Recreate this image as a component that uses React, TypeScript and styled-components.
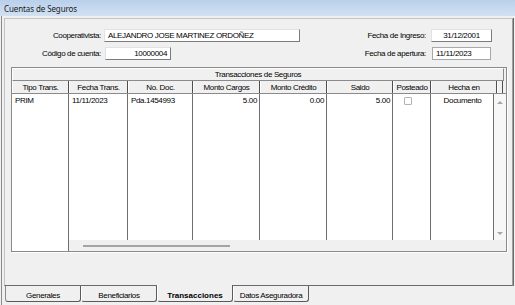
import React from 'react'
import styled, { createGlobalStyle } from 'styled-components'

const GlobalStyle = createGlobalStyle`
  html, body {
    margin: 0;
    padding: 0;
    background: #f0f0f0;
  }
  body {
    font-family: 'Liberation Sans', Arial, sans-serif;
    font-size: 8px;
    letter-spacing: -0.35px;
    color: #000;
  }
  * {
    box-sizing: border-box;
  }
`

const Window = styled.div`
  width: 515px;
  height: 305px;
  display: flex;
  flex-direction: column;
  background: #f0f0f0;
  overflow: hidden;
`

const TitleBar = styled.div`
  height: 16px;
  flex: none;
  display: flex;
  align-items: center;
  padding-left: 4px;
  background: linear-gradient(to bottom, #b9d0ea, #d2e1f2);
  font-family: 'Noto Sans', sans-serif;
  font-size: 8px;
  letter-spacing: -0.1px;
  color: #1a1a1a;
`

const Frame = styled.div`
  flex: 1;
  display: flex;
  flex-direction: column;
  margin-left: 1px;
  border-left: 1px solid #8a8a8a;
  padding: 2px 2px 3px 2px;
`

const TabPage = styled.div`
  flex: 1;
  display: flex;
  flex-direction: column;
  border: 1px solid;
  border-color: #c4c4c4 #a0a0a0 #6a6a6a #c4c4c4;
  box-shadow: 1px 0 0 #6a6a6a;
  padding-top: 10px;
`

const Fields = styled.div`
  display: grid;
  grid-template-columns: 99px 196px 1fr 61px;
  grid-auto-rows: 13px;
  row-gap: 5px;
  align-items: center;
  padding-right: 20px;
`

const Label = styled.span<{ $pad: number }>`
  text-align: right;
  padding-right: ${({ $pad }) => $pad}px;
  white-space: nowrap;
`

const Input = styled.div<{ $w?: number; $align?: string; $flat?: boolean; $indent?: number }>`
  height: 13px;
  width: ${({ $w }) => ($w ? `${$w}px` : '100%')};
  margin-left: ${({ $indent }) => $indent || 0}px;
  background: #fff;
  display: flex;
  align-items: center;
  justify-content: ${({ $align }) => $align || 'flex-start'};
  padding: 0 3px;
  white-space: nowrap;
  border: 1px solid;
  border-color: ${({ $flat }) => ($flat ? '#a8a8a8' : '#e2e2e2 #7c7c7c #7c7c7c #e2e2e2')};
`

const GridBox = styled.div`
  margin: 7px 5px 0 6px;
  height: 185px;
  border: 1px solid #8a8a8a;
  box-shadow: 1px 1px 0 #fff;
  display: flex;
  flex-direction: column;
`

const GridTitle = styled.div`
  height: 13px;
  flex: none;
  display: flex;
  align-items: center;
  justify-content: center;
  border: 1px solid;
  border-color: #fff #8a8a8a #8a8a8a #fff;
  margin-right: 2px;
`

const HeaderRow = styled.div`
  height: 13px;
  flex: none;
  display: flex;
  border-bottom: 1px solid #8a8a8a;
`

const HeaderCell = styled.div<{ $w: number }>`
  width: ${({ $w }) => $w}px;
  flex: none;
  display: flex;
  align-items: center;
  justify-content: center;
  border-right: 1px solid #4e4e4e;
  border-left: 1px solid #fff;
  white-space: nowrap;
`

const Body = styled.div`
  flex: 1;
  display: flex;
  min-height: 0;
`

const FrozenColumn = styled.div<{ $w: number }>`
  width: ${({ $w }) => $w}px;
  flex: none;
  background: #fff;
  border-right: 1px solid #6e6e6e;
`

const Scrolling = styled.div`
  flex: 1;
  display: flex;
  flex-direction: column;
`

const Columns = styled.div`
  flex: 1;
  display: flex;
`

const Column = styled.div<{ $w: number }>`
  width: ${({ $w }) => $w}px;
  flex: none;
  background: #fff;
  border-right: 1px solid #6e6e6e;
`

const Cell = styled.div<{ $align?: string }>`
  height: 13px;
  display: flex;
  align-items: center;
  justify-content: ${({ $align }) => $align || 'flex-start'};
  padding: 0 2px 0 3px;
  white-space: nowrap;
`

const CheckBox = styled.div`
  width: 8px;
  height: 8px;
  margin: 3px 0 0 11px;
  border: 1px solid #b4b4b4;
  border-radius: 1px;
  background: #fff;
`

const VScroll = styled.div`
  flex: 1;
  display: flex;
  flex-direction: column;
  justify-content: space-between;
  align-items: center;
  background: #f7f7f7;
  padding: 7px 0 5px;
`

const Arrow = styled.div<{ $down?: boolean }>`
  width: 0;
  height: 0;
  border-left: 3px solid transparent;
  border-right: 3px solid transparent;
  ${({ $down }) => ($down ? 'border-top: 3px solid #a6a6a6;' : 'border-bottom: 3px solid #a6a6a6;')}
`

const HScroll = styled.div`
  height: 11px;
  flex: none;
  display: flex;
  align-items: center;
  padding-left: 14px;
  background: #f0f0f0;
`

const Thumb = styled.div`
  width: 147px;
  height: 2px;
  background: #a4a4a4;
`

const TabStrip = styled.div`
  height: 16px;
  flex: none;
  display: flex;
  padding-left: 1px;
`

const Tab = styled.div<{ $active?: boolean; $first?: boolean }>`
  width: 76px;
  flex: none;
  display: flex;
  align-items: center;
  justify-content: center;
  padding-top: 3px;
  border-right: 1px solid #5a5a5a;
  border-bottom: 1px solid #5a5a5a;
  border-left: 1px solid ${({ $first }) => ($first ? '#8a8a8a' : '#fff')};
  border-radius: 0 0 3px 3px;
  font-weight: ${({ $active }) => ($active ? 700 : 400)};
  letter-spacing: ${({ $active }) => ($active ? '0' : '-0.35px')};
  ${({ $active }) => ($active ? 'margin-top: -1px; height: 17px; padding-top: 4px; background: #f0f0f0;' : '')}
`

const headers = [
  { label: 'Tipo Trans.', w: 57 },
  { label: 'Fecha Trans.', w: 59 },
  { label: 'No. Doc.', w: 65 },
  { label: 'Monto Cargos', w: 67 },
  { label: 'Monto Crédito', w: 67 },
  { label: 'Saldo', w: 66 },
  { label: 'Posteado', w: 38 },
  { label: 'Hecha en', w: 66 },
]

const row = { tipo: 'PRIM', fecha: '11/11/2023', doc: 'Pda.1454993', cargos: '5.00', credito: '0.00', saldo: '5.00', hecha: 'Documento' }

const tabs = ['Generales', 'Beneficiarios', 'Transacciones', 'Datos Aseguradora']

export default function App() {
  return (
    <Window>
      <GlobalStyle />
      <TitleBar>Cuentas de Seguros</TitleBar>
      <Frame>
        <TabPage>
          <Fields>
            <Label $pad={3}>Cooperativista:</Label>
            <Input>ALEJANDRO JOSE MARTINEZ ORDOÑEZ</Input>
            <Label $pad={5}>Fecha de Ingreso:</Label>
            <Input $align="center">31/12/2001</Input>
            <Label $pad={3}>Código de cuenta:</Label>
            <Input $w={66} $indent={1} $align="flex-end">10000004</Input>
            <Label $pad={5}>Fecha de apertura:</Label>
            <Input $w={59} $indent={1} $flat>11/11/2023</Input>
          </Fields>
          <GridBox>
            <GridTitle>Transacciones de Seguros</GridTitle>
            <HeaderRow>
              {headers.map(h => (
                <HeaderCell key={h.label} $w={h.w}>{h.label}</HeaderCell>
              ))}
              <HeaderCell $w={6} />
            </HeaderRow>
            <Body>
              <FrozenColumn $w={57}>
                <Cell>{row.tipo}</Cell>
              </FrozenColumn>
              <Scrolling>
                <Columns>
                  <Column $w={59}><Cell>{row.fecha}</Cell></Column>
                  <Column $w={65}><Cell>{row.doc}</Cell></Column>
                  <Column $w={67}><Cell $align="flex-end">{row.cargos}</Cell></Column>
                  <Column $w={67}><Cell $align="flex-end">{row.credito}</Cell></Column>
                  <Column $w={66}><Cell $align="flex-end">{row.saldo}</Cell></Column>
                  <Column $w={38}><CheckBox /></Column>
                  <Column $w={63}><Cell $align="center">{row.hecha}</Cell></Column>
                  <VScroll>
                    <Arrow />
                    <Arrow $down />
                  </VScroll>
                </Columns>
                <HScroll>
                  <Thumb />
                </HScroll>
              </Scrolling>
            </Body>
          </GridBox>
        </TabPage>
        <TabStrip>
          {tabs.map((t, i) => (
            <Tab key={t} $first={i === 0} $active={t === 'Transacciones'}>{t}</Tab>
          ))}
        </TabStrip>
      </Frame>
    </Window>
  )
}
